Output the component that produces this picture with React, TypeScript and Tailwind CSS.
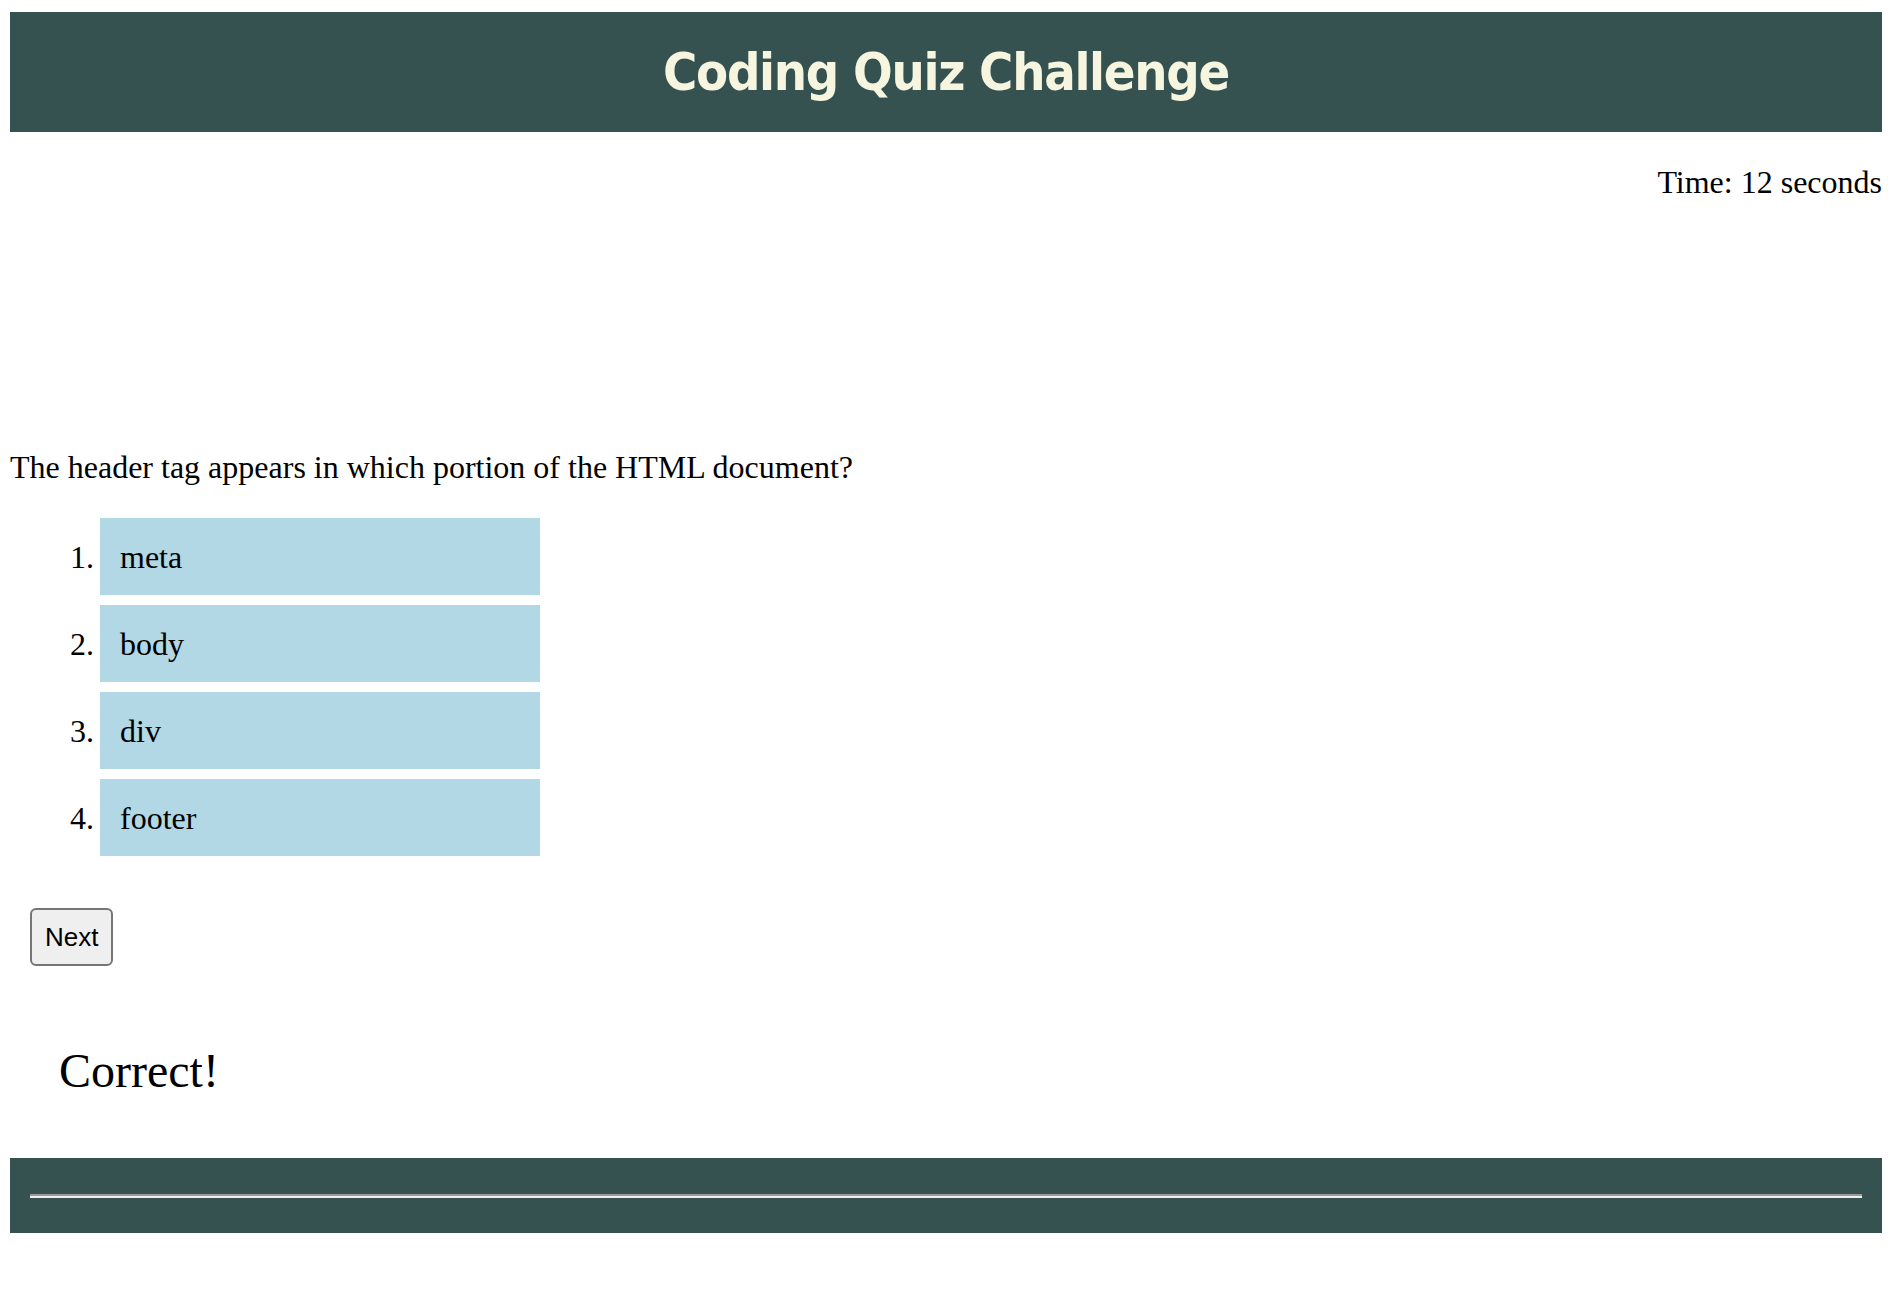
import React from 'react';

const answers = ['meta', 'body', 'div', 'footer'];

const serif = { fontFamily: '"Liberation Serif", "Times New Roman", serif' };

export default function App() {
  return (
    <div className="min-h-screen bg-white pl-[10px] pr-[12px] pt-[12px] text-black font-['Liberation_Serif',serif]">
      {/* Header */}
      <header className="h-[120px] bg-[#355150] flex items-center justify-center">
        <h1 className="text-[52px] leading-[60px] font-bold text-[#f6f5df] font-['DejaVu_Sans_Condensed','DejaVu_Sans',sans-serif] tracking-[-1.3px]">
          Coding Quiz Challenge
        </h1>
      </header>

      {/* Timer */}
      <div className="mt-[32px] text-right text-[32px] leading-[36px]">Time: 12 seconds</div>

      {/* Question */}
      <p className="mt-[249px] text-[32px] leading-[36px]">
        The header tag appears in which portion of the HTML document?
      </p>

      <ol className="mt-[33px] flex flex-col gap-[10px]">
        {answers.map((a, i) => (
          <li key={a} className="flex items-center text-[32px] leading-[36px]">
            <span className="w-[90px] pr-[6px] text-right">{i + 1}.</span>
            <div className="w-[440px] h-[77px] bg-[#b2d7e5] flex items-center pl-[20px]">{a}</div>
          </li>
        ))}
      </ol>

      <div className="mt-[52px] pl-[20px]">
        <button className="border-2 border-[#767676] rounded-[6px] bg-[#efefef] px-[13px] py-[12px] text-[26px] leading-[30px] font-['Liberation_Sans',Arial,sans-serif]">
          Next
        </button>
      </div>

      <div className="mt-[77px] pl-[49px] text-[48px] leading-[56px]" style={serif}>
        Correct!
      </div>

      {/* Footer */}
      <footer className="mt-[59px] bg-[#355150] px-[20px] pt-[36px] pb-[35px]">
        <div className="h-[4px] border-t-2 border-b-2 border-t-[#9a9a9a] border-b-[#eeeeee]" />
      </footer>
    </div>
  );
}
